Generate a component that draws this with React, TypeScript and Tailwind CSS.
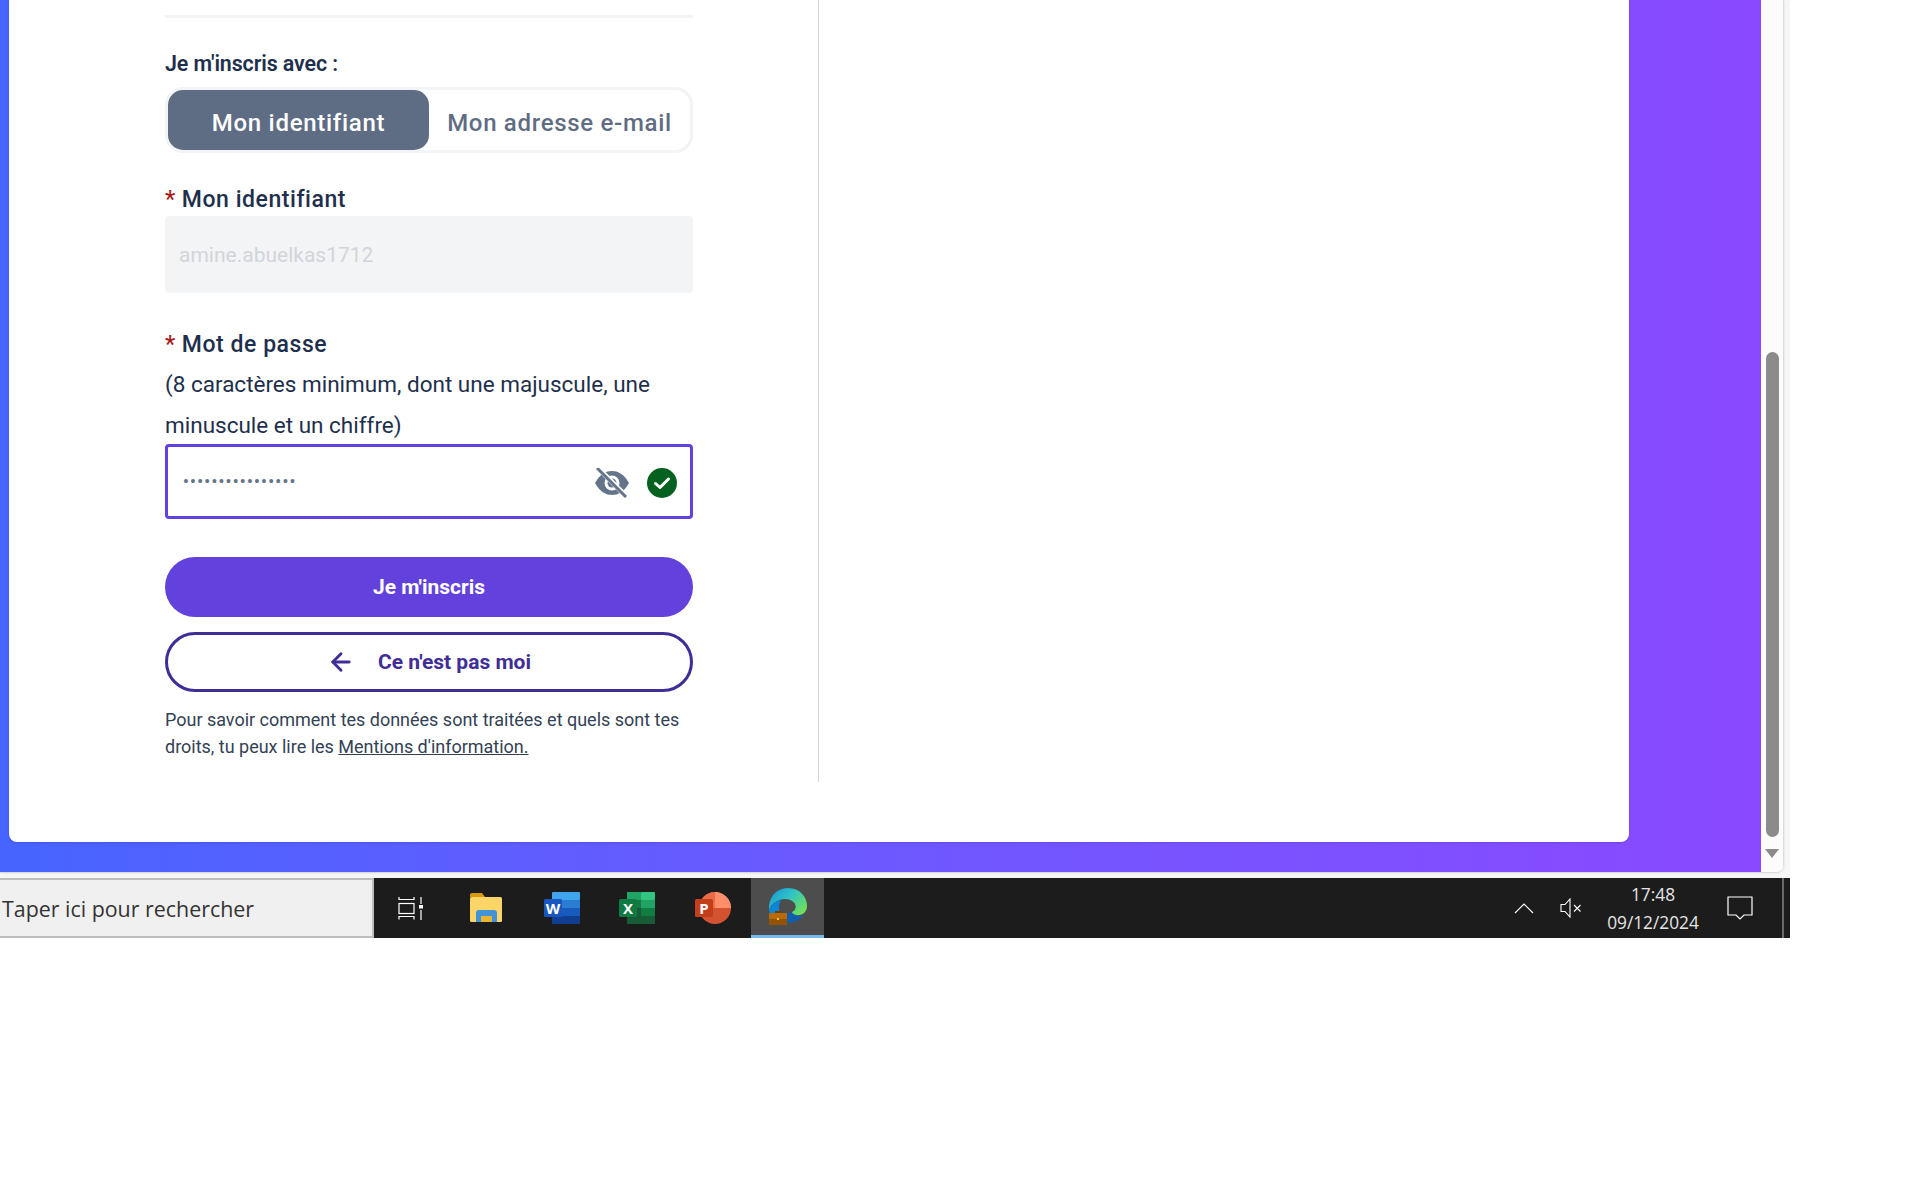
import { ArrowLeft } from 'lucide-react';

const EyeOff = () => (
  <svg width="36" height="30" viewBox="0 0 36 30">
    <path d="M1 15 C6 6 12 3 18 3 C24 3 30 6 35 15 C30 24 24 27 18 27 C12 27 6 24 1 15 Z" fill="#64748b" />
    <circle cx="18" cy="15" r="7.5" fill="#fff" />
    <circle cx="18" cy="15" r="4.5" fill="#64748b" />
    <path d="M4 0 L33 29" stroke="#fff" strokeWidth="5" />
    <path d="M3 0 L32 29" stroke="#64748b" strokeWidth="3" />
  </svg>
);

const CheckBadge = () => (
  <svg width="30" height="30" viewBox="0 0 30 30">
    <circle cx="15" cy="15" r="15" fill="#04611f" />
    <path d="M8.5 15.5 L13 19.5 L21.5 11" fill="none" stroke="#fff" strokeWidth="3" strokeLinecap="round" strokeLinejoin="round" />
  </svg>
);

const TaskView = () => (
  <svg width="26" height="24" viewBox="0 0 26 24" fill="none" stroke="#fff" strokeWidth="1.2">
    <path d="M1 4 V1 M16 4 V1 M1 3.5 H16" />
    <rect x="1" y="7.5" width="15" height="10" />
    <path d="M1 20.5 H16 M1 20 V23.5 M16 20 V23.5" />
    <path d="M23 1 V8 M23 14 V24" />
    <rect x="21" y="9" width="4" height="3.5" fill="#fff" stroke="none" />
  </svg>
);

const Explorer = () => (
  <svg width="33" height="30" viewBox="0 0 33 30">
    <path d="M0 2 Q0 0 2 0 H12 L15 4 H0 Z" fill="#d99a0c" />
    <rect x="0" y="4" width="32" height="25" rx="1.5" fill="#fcd568" />
    <path d="M6 28 V20 Q6 17 9 17 H24 Q27 17 27 20 V29 H22 V23 H11 V29 H6 Z" fill="#3f93d6" />
    <rect x="11" y="23" width="11" height="6" fill="#e8b52e" />
  </svg>
);

const Word = () => (
  <svg width="36" height="32" viewBox="0 0 36 32">
    <rect x="8" y="0" width="28" height="8" rx="1" fill="#41a5ee" />
    <rect x="8" y="8" width="28" height="8" fill="#2b7cd3" />
    <rect x="8" y="16" width="28" height="8" fill="#185abd" />
    <rect x="8" y="24" width="28" height="8" rx="1" fill="#103f91" />
    <rect x="0" y="7" width="18" height="18" rx="1.5" fill="#1a56c0" />
    <text x="9" y="21.5" textAnchor="middle" fontFamily="'Open Sans', sans-serif" fontSize="15" fontWeight="700" fill="#fff">W</text>
  </svg>
);

const Excel = () => (
  <svg width="36" height="32" viewBox="0 0 36 32">
    <rect x="8" y="0" width="14" height="8" fill="#21a366" />
    <rect x="22" y="0" width="14" height="8" rx="1" fill="#33c481" />
    <rect x="8" y="8" width="14" height="8" fill="#107c41" />
    <rect x="22" y="8" width="14" height="8" fill="#21a366" />
    <rect x="8" y="16" width="14" height="8" fill="#185c37" />
    <rect x="22" y="16" width="14" height="8" fill="#107c41" />
    <rect x="8" y="24" width="28" height="8" rx="1" fill="#185c37" />
    <rect x="0" y="7" width="18" height="18" rx="1.5" fill="#0f7a42" />
    <text x="9" y="21.5" textAnchor="middle" fontFamily="'Open Sans', sans-serif" fontSize="15" fontWeight="700" fill="#fff">X</text>
  </svg>
);

const PowerPoint = () => (
  <svg width="36" height="32" viewBox="0 0 36 32">
    <circle cx="20" cy="16" r="16" fill="#d35230" />
    <path d="M20 0 A16 16 0 0 1 36 16 H20 Z" fill="#ff8f6b" />
    <path d="M20 0 A16 16 0 0 0 4 16 H20 Z" fill="#ed6c47" />
    <rect x="0" y="7" width="18" height="18" rx="1.5" fill="#c43e1c" />
    <text x="9" y="21.5" textAnchor="middle" fontFamily="'Open Sans', sans-serif" fontSize="15" fontWeight="700" fill="#fff">P</text>
  </svg>
);

const Edge = () => (
  <svg width="38" height="38" viewBox="0 0 38 38">
    <defs>
      <linearGradient id="edgeTop" x1="0" y1="0" x2="1" y2="0.7">
        <stop offset="0" stopColor="#1590d8" />
        <stop offset="0.5" stopColor="#30c3c6" />
        <stop offset="1" stopColor="#6fe05a" />
      </linearGradient>
    </defs>
    <path d="M0 18 C1 6 10 0 19 0 C31 0 38 9 38 18 C38 25 32 28 27 27 C25 26.5 23 25.5 23 24 C27 22 28 18 25 14.500 C21 10 13 10 8 13 C4 15.500 2 17 0 22 Z" fill="url(#edgeTop)" />
    <path d="M0 22 C2 16 6 13 12 12 C9 17 9 25 14 32 C7 32 1 28 0 22 Z" fill="#0c84d6" />
    <path d="M14 32 C19 37 29 35 34 27 C29 29 24 27 22 24 C17 26 14 28 14 32 Z" fill="#0f5fae" />
    <rect x="0" y="25" width="18" height="12" rx="0.5" fill="#b76a08" />
    <rect x="6" y="23" width="6" height="2" fill="#6b4308" />
    <rect x="0" y="31" width="18" height="6" fill="#945204" />
    <rect x="8" y="30" width="2" height="2" fill="#f5c242" />
  </svg>
);

const Caret = () => (
  <svg width="20" height="12" viewBox="0 0 20 12" fill="none" stroke="#fff" strokeWidth="1.1">
    <path d="M1 11 L10 2 L19 11" />
  </svg>
);

const Muted = () => (
  <svg width="22" height="20" viewBox="0 0 22 20" fill="none" stroke="#fff" strokeWidth="1.1">
    <path d="M1 6.5 H5 L10 1 V19 L5 13.5 H1 Z" />
    <path d="M14 7 L20.5 13.5 M20.5 7 L14 13.5" />
  </svg>
);

const Notification = () => (
  <svg width="26" height="24" viewBox="0 0 26 24" fill="none" stroke="#fff" strokeWidth="1.2">
    <path d="M1 1 H25 V19 H17 L13 23 L9 19 H1 Z" />
  </svg>
);

export default function App() {
  return (
    <div className="w-[1920px] h-[1200px] bg-white overflow-hidden font-['Roboto',sans-serif]">
      <div className="w-[1790px]">
        {/* browser window */}
        <div className="h-[878px] pr-[6px] bg-[#f6f6f6]">
          <div className="flex h-[872px] rounded-br-lg overflow-hidden shadow-[0_1px_2px_rgba(0,0,0,0.15)]">
            <div className="w-[1761px] h-full pl-[9px] bg-gradient-to-r from-[#4664ff] to-[#8a49ff]">
              <div className="w-[1620px] h-[842px] bg-white rounded-b-lg shadow-sm">
                <div className="w-[810px] h-[782px] pl-[156px] border-r border-[#d1d5db]">
                  <div className="w-[528px]">
                    <div className="pt-[15px]">
                      <div className="h-[3px] bg-[#f3f4f6]" />
                    </div>

                    <p className="mt-[34px] text-[21.400px] leading-6 font-semibold text-[#1e2f4d] tracking-[-0.1px]">Je m'inscris avec :</p>

                    <div className="mt-[11px] h-[66px] flex border-[3px] border-[#f3f4f6] rounded-[18px]">
                      <div className="w-[261px] flex items-center justify-center bg-[#5f6d84] rounded-[15px] text-white text-[24px] font-medium tracking-[0.7px] pt-[5px]">Mon identifiant</div>
                      <div className="flex-1 flex items-center justify-center text-[#5f6d84] text-[24px] font-medium tracking-[0.7px] pt-[5px]">Mon adresse e-mail</div>
                    </div>

                    <label className="block mt-[33px] text-[23px] leading-7 font-medium text-[#1e2f4d] tracking-[0.55px]">
                      <span className="text-[#a61c1c] mr-[6px]">*</span>Mon identifiant
                    </label>
                    <div className="mt-[2px] h-[77px] flex items-center pl-[14px] pt-[2px] bg-[#f3f4f6] rounded text-[21px] text-[#d1d5db]">amine.abuelkas1712</div>

                    <label className="block mt-[38px] text-[23px] leading-7 font-medium text-[#1e2f4d] tracking-[0.55px]">
                      <span className="text-[#a61c1c] mr-[6px]">*</span>Mot de passe
                    </label>
                    <p className="mt-[5px] text-[22.500px] leading-[41px] text-[#1e2f4d]">(8 caractères minimum, dont une majuscule, une minuscule et un chiffre)</p>

                    <div className="-mt-[2px] h-[75px] flex items-center pl-[15px] pr-[13px] border-[3px] border-[#6241dc] rounded">
                      <span className="flex-1 text-[#64748b] text-[16px] tracking-[1.35px] font-bold">••••••••••••••••</span>
                      <span className="mt-[3px]"><EyeOff /></span>
                      <span className="ml-[17px] mt-[3px]"><CheckBadge /></span>
                    </div>

                    <button className="block mt-[38px] w-full h-[60px] pt-[1px] rounded-full bg-[#6241dc] text-white text-[21px] font-bold">Je m'inscris</button>

                    <button className="mt-[15px] w-full h-[60px] pt-[1px] flex items-center justify-center rounded-full border-[3px] border-[#412d96] text-[#412d96] text-[21px] font-bold">
                      <ArrowLeft size={28} strokeWidth={2.5} className="mr-[23px] -mt-[1px]" />
                      Ce n'est pas moi
                    </button>

                    <p className="mt-[14px] text-[18px] leading-[27px] text-[#334155] tracking-[-0.01px]">
                      Pour savoir comment tes données sont traitées et quels sont tes droits, tu peux lire les <span className="underline">Mentions d'information.</span>
                    </p>
                  </div>
                </div>
              </div>
            </div>

            {/* scrollbar */}
            <div className="relative flex-1 h-full bg-[#fcfcfc] border-r border-[#dcdcdc]">
              <div className="absolute left-[5px] top-[352px] w-[13px] h-[485px] rounded-full bg-[#8b8b8b]" />
              <div className="absolute left-[4px] top-[849px] w-0 h-0 border-x-[7.5px] border-x-transparent border-t-[9px] border-t-[#8b8b8b]" />
            </div>
          </div>
        </div>

        {/* taskbar */}
        <div className="flex h-[60px] bg-[#1c1c1c] text-white">
          <div className="w-[374px] flex items-center pl-[2px] pt-[3px] bg-[#f0f0f0] border-y-2 border-r-2 border-[#bdbdbd] text-[21.400px] text-[#333] font-['Open_Sans',sans-serif]">Taper ici pour rechercher</div>
          <div className="w-[73px] flex items-center justify-center"><TaskView /></div>
          <div className="w-[78px] flex items-center justify-center"><Explorer /></div>
          <div className="w-[74px] flex items-center justify-center"><Word /></div>
          <div className="w-[75px] flex items-center justify-center"><Excel /></div>
          <div className="w-[77px] flex items-center justify-center"><PowerPoint /></div>
          <div className="w-[73px] flex items-center justify-center bg-[#4d4d4d] border-b-[3px] border-[#76b9ed]"><Edge /></div>
          <div className="flex-1" />
          <div className="w-[48px] flex items-center justify-center"><Caret /></div>
          <div className="w-[46px] flex items-center justify-center"><Muted /></div>
          <div className="w-[118px] pt-[1px] flex flex-col items-center justify-center text-[17.300px] leading-[28px] text-[#e6e6e6] font-['Open_Sans',sans-serif]">
            <span>17:48</span>
            <span>09/12/2024</span>
          </div>
          <div className="w-[56px] flex items-center justify-center"><Notification /></div>
          <div className="w-[14px]" />
          <div className="w-[2px] bg-[#6a6a6a]" />
          <div className="w-[6px]" />
        </div>
      </div>
    </div>
  );
}
